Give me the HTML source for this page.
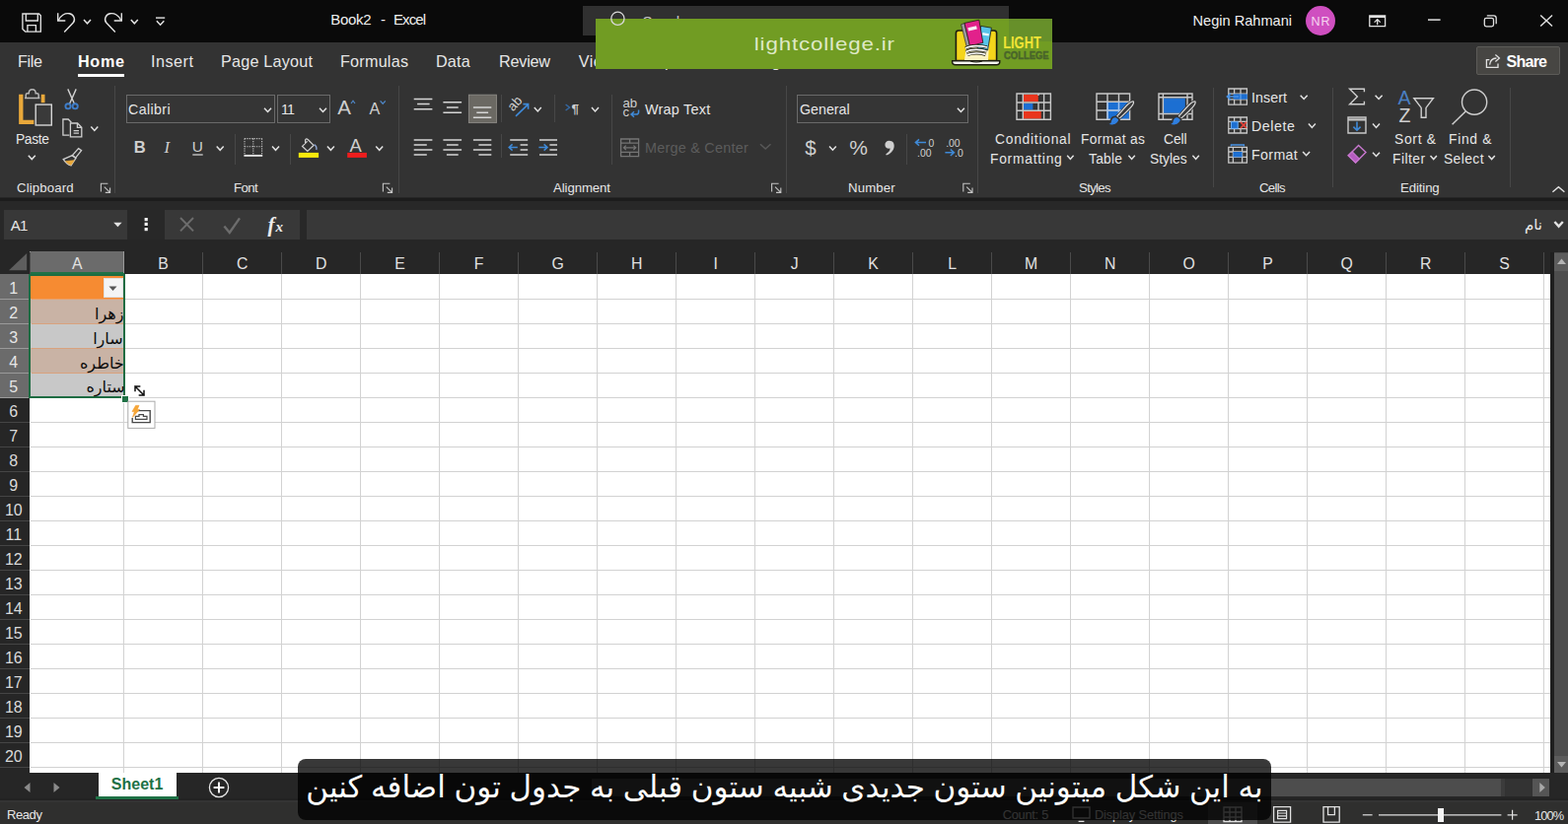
<!DOCTYPE html>
<html><head><meta charset="utf-8"><title>Excel</title>
<style>
html,body{margin:0;padding:0;background:#262626;}
body{width:1590px;height:836px;overflow:hidden;position:relative;font-family:"Liberation Sans",sans-serif;}
#r{position:absolute;left:0;top:0;width:1590px;height:836px;overflow:hidden;}
#r div,#r span,#r svg{position:absolute;display:block;}
#r svg.t{left:0;top:0;overflow:visible;}
</style></head><body><div id="r">
<div style="left:0px;top:0px;width:1590px;height:42.6px;background:#0a0a0a;"></div>
<div style="left:0px;top:42.6px;width:1590px;height:157.9px;background:#333333;"></div>
<div style="left:0px;top:200.5px;width:1590px;height:3.8px;background:#1c1c1c;"></div>
<div style="left:0px;top:204.3px;width:1590px;height:74px;background:#282828;"></div>
<div style="left:0px;top:243px;width:1590px;height:35px;background:#262626;"></div>
<svg class="t" width="1" height="1"><text transform="translate(335.30,25.00)" font-size="15" fill="#f0f0f0" textLength="41.30" lengthAdjust="spacing">Book2</text></svg>
<svg class="t" width="1" height="1"><text transform="translate(386.00,25.00)" font-size="15" fill="#f0f0f0">-</text></svg>
<svg class="t" width="1" height="1"><text transform="translate(399.00,25.00)" font-size="15" fill="#f0f0f0" textLength="33.00" lengthAdjust="spacing">Excel</text></svg>
<div style="left:591px;top:5.8px;width:432px;height:30.4px;background:#303030;"></div>
<svg class="t" width="1" height="1"><text transform="translate(651.60,26.50)" font-size="15" fill="#c8c8c8" textLength="42.40" lengthAdjust="spacing">Search</text></svg>
<svg class="t" width="1" height="1"><text transform="translate(1209.60,26.40)" font-size="14.6" fill="#f0f0f0" textLength="100.40" lengthAdjust="spacing">Negin Rahmani</text></svg>
<div style="left:1324px;top:6px;width:30px;height:30px;border-radius:15px;background:#cf4fc0"></div>
<svg class="t" width="1" height="1"><text transform="translate(1329.50,25.60)" font-size="12.5" fill="#f6d3f0" textLength="19.00" lengthAdjust="spacing">NR</text></svg>
<svg class="t" width="1" height="1"><text transform="translate(18.00,68.00)" font-size="16.2" fill="#e6e6e6" textLength="25.00" lengthAdjust="spacing">File</text></svg>
<svg class="t" width="1" height="1"><text transform="translate(79.00,68.00)" font-size="16.2" fill="#ffffff" font-weight="bold" textLength="47.00" lengthAdjust="spacing">Home</text></svg>
<div style="left:79px;top:75px;width:47px;height:3px;background:#ffffff;"></div>
<svg class="t" width="1" height="1"><text transform="translate(153.00,68.00)" font-size="16.2" fill="#e6e6e6" textLength="43.00" lengthAdjust="spacing">Insert</text></svg>
<svg class="t" width="1" height="1"><text transform="translate(224.00,68.00)" font-size="16.2" fill="#e6e6e6" textLength="93.00" lengthAdjust="spacing">Page Layout</text></svg>
<svg class="t" width="1" height="1"><text transform="translate(345.00,68.00)" font-size="16.2" fill="#e6e6e6" textLength="69.00" lengthAdjust="spacing">Formulas</text></svg>
<svg class="t" width="1" height="1"><text transform="translate(442.00,68.00)" font-size="16.2" fill="#e6e6e6" textLength="34.70" lengthAdjust="spacing">Data</text></svg>
<svg class="t" width="1" height="1"><text transform="translate(506.00,68.00)" font-size="16.2" fill="#e6e6e6" textLength="52.00" lengthAdjust="spacing">Review</text></svg>
<svg class="t" width="1" height="1"><text transform="translate(586.70,68.00)" font-size="16.2" fill="#e6e6e6" textLength="36.30" lengthAdjust="spacing">View</text></svg>
<svg class="t" width="1" height="1"><text transform="translate(650.00,68.00)" font-size="16.2" fill="#e6e6e6" textLength="33.00" lengthAdjust="spacing">Help</text></svg>
<svg class="t" width="1" height="1"><text transform="translate(710.00,68.00)" font-size="16.2" fill="#e6e6e6" textLength="90.00" lengthAdjust="spacing">Table Design</text></svg>
<div style="left:1497.4px;top:47.4px;width:84.6px;height:28.8px;background:#474643;border:1px solid #5c5b58;box-sizing:border-box;border-radius:2px"></div>
<svg class="t" width="1" height="1"><text transform="translate(1527.60,68.00)" font-size="16" fill="#ffffff" font-weight="bold" textLength="41.40" lengthAdjust="spacing">Share</text></svg>
<div style="left:604px;top:19px;width:463px;height:51px;background:#719c23;"></div>
<div style="left:1023px;top:19px;width:44px;height:23px;background:#67902a;"></div>
<svg class="t" width="1" height="1"><text transform="translate(764.80,51.20) scale(1.16,1)" font-size="19.2" fill="#dfe9c6" textLength="122.59" lengthAdjust="spacing">lightcollege.ir</text></svg>
<svg style="left:0;top:0" width="1590" height="836" viewBox="0 0 1590 836" font-family="Liberation Sans, sans-serif"><path d="M969.4 33.6 Q969.4 31 972 31 H1008 Q1010.6 31 1010.6 33.6 V61.6 H969.4 Z" stroke="#1c1c10" stroke-width="1.6" fill="#f4d51b" /><path d="M965.6 61.8 H1013.8 Q1014.2 65.8 1010.4 65.8 H969 Q965.2 65.8 965.6 61.8 Z" stroke="#1c1c10" stroke-width="1.4" fill="#f6f6f0" /><path d="M984 62 Q990 64 996 62" stroke="#1c1c10" stroke-width="1.2" fill="none" /><path d="M980 46 L1003 44 L1002 61 H978 Z" stroke="#f4d51b" stroke-width="0" fill="#fbf3c2" /><path d="M994.6 26.4 L1005.4 28.2 L1001.6 51 L991 49.2 Z" stroke="#1c1c10" stroke-width="0.8" fill="#58c3ea" /><path d="M996.4 33 L1003 34.2 L1002.6 36.6 L996 35.4 Z" stroke="#fff" stroke-width="0" fill="#eaf7fc" /><path d="M974.6 24.8 L978 23.6 L983.6 46.4 L980.2 47.6 Z" stroke="#1c1c10" stroke-width="0.6" fill="#9a9aa0" /><path d="M978 23.4 L992.8 20.2 L996.8 43.4 L983.4 46.6 Z" stroke="#1c1c10" stroke-width="0.8" fill="#e2218b" /><path d="M981.4 28.2 L990 26.2 L990.8 29.6 L982.2 31.6 Z" stroke="#fff" stroke-width="0" fill="#f8eef4" /><path d="M979 49 C984 46 994 46 1001 48 M979.4 52.4 C985 49.6 995 50 1000.6 52 M981 55.6 C986 53.4 994 53.6 999.4 55.4" stroke="#1c1c10" stroke-width="3.2" fill="none" /><path d="M979 49 C984 46 994 46 1001 48 M979.4 52.4 C985 49.6 995 50 1000.6 52 M981 55.6 C986 53.4 994 53.6 999.4 55.4" stroke="#ffffff" stroke-width="1.7" fill="none" /><text x="1017.2" y="49" font-size="15.6" font-weight="bold" fill="#f3e436" textLength="38.6" lengthAdjust="spacingAndGlyphs">LIGHT</text><text x="1018" y="60.4" font-size="11.6" font-weight="bold" fill="#48642a" stroke="#48642a" stroke-width="0.5" textLength="45.6" lengthAdjust="spacingAndGlyphs">COLLEGE</text></svg>
<svg class="t" width="1" height="1"><text transform="translate(17.00,195.00)" font-size="13.2" fill="#e6e6e6" textLength="57.70" lengthAdjust="spacing">Clipboard</text></svg>
<svg class="t" width="1" height="1"><text transform="translate(237.00,195.00)" font-size="13.2" fill="#e6e6e6" textLength="24.60" lengthAdjust="spacing">Font</text></svg>
<svg class="t" width="1" height="1"><text transform="translate(561.00,195.00)" font-size="13.2" fill="#e6e6e6" textLength="58.00" lengthAdjust="spacing">Alignment</text></svg>
<svg class="t" width="1" height="1"><text transform="translate(860.00,195.00)" font-size="13.2" fill="#e6e6e6" textLength="47.70" lengthAdjust="spacing">Number</text></svg>
<svg class="t" width="1" height="1"><text transform="translate(1094.00,195.00)" font-size="13.2" fill="#e6e6e6" textLength="32.60" lengthAdjust="spacing">Styles</text></svg>
<svg class="t" width="1" height="1"><text transform="translate(1277.00,195.00)" font-size="13.2" fill="#e6e6e6" textLength="26.70" lengthAdjust="spacing">Cells</text></svg>
<svg class="t" width="1" height="1"><text transform="translate(1420.00,195.00)" font-size="13.2" fill="#e6e6e6" textLength="39.70" lengthAdjust="spacing">Editing</text></svg>
<svg class="t" width="1" height="1"><text transform="translate(16.00,146.00)" font-size="13.8" fill="#e6e6e6" textLength="34.00" lengthAdjust="spacing">Paste</text></svg>
<div style="left:127.5px;top:96px;width:151px;height:28.5px;background:#353535;border:1px solid #6a6a6a;box-sizing:border-box;"></div>
<div style="left:281px;top:96px;width:53.6px;height:28.5px;background:#353535;border:1px solid #6a6a6a;box-sizing:border-box;"></div>
<div style="left:808px;top:96px;width:174px;height:28.5px;background:#353535;border:1px solid #6a6a6a;box-sizing:border-box;"></div>
<svg class="t" width="1" height="1"><text transform="translate(130.00,115.70)" font-size="14.200000000000001" fill="#e6e6e6" textLength="42.60" lengthAdjust="spacing">Calibri</text></svg>
<svg class="t" width="1" height="1"><text transform="translate(285.00,115.70)" font-size="14.200000000000001" fill="#e6e6e6" textLength="14.00" lengthAdjust="spacing">11</text></svg>
<svg class="t" width="1" height="1"><text transform="translate(811.00,115.70)" font-size="14.200000000000001" fill="#e6e6e6" textLength="50.70" lengthAdjust="spacing">General</text></svg>
<svg class="t" width="1" height="1"><text transform="translate(654.00,115.90)" font-size="14.4" fill="#e6e6e6" textLength="66.20" lengthAdjust="spacing">Wrap Text</text></svg>
<svg class="t" width="1" height="1"><text transform="translate(654.00,155.20)" font-size="14.4" fill="#5c5c5c" textLength="104.70" lengthAdjust="spacing">Merge &amp; Center</text></svg>
<svg class="t" width="1" height="1"><text transform="translate(1009.00,146.00)" font-size="13.8" fill="#e6e6e6" textLength="76.60" lengthAdjust="spacing">Conditional</text></svg>
<svg class="t" width="1" height="1"><text transform="translate(1004.00,166.00)" font-size="13.8" fill="#e6e6e6" textLength="72.80" lengthAdjust="spacing">Formatting</text></svg>
<svg class="t" width="1" height="1"><text transform="translate(1096.00,146.00)" font-size="13.8" fill="#e6e6e6" textLength="65.00" lengthAdjust="spacing">Format as</text></svg>
<svg class="t" width="1" height="1"><text transform="translate(1104.00,166.00)" font-size="13.8" fill="#e6e6e6" textLength="34.00" lengthAdjust="spacing">Table</text></svg>
<svg class="t" width="1" height="1"><text transform="translate(1180.00,146.00)" font-size="13.8" fill="#e6e6e6" textLength="23.60" lengthAdjust="spacing">Cell</text></svg>
<svg class="t" width="1" height="1"><text transform="translate(1166.00,166.00)" font-size="13.8" fill="#e6e6e6" textLength="37.60" lengthAdjust="spacing">Styles</text></svg>
<svg class="t" width="1" height="1"><text transform="translate(1269.00,104.00)" font-size="14.200000000000001" fill="#e6e6e6" textLength="36.00" lengthAdjust="spacing">Insert</text></svg>
<svg class="t" width="1" height="1"><text transform="translate(1269.00,132.80)" font-size="14.200000000000001" fill="#e6e6e6" textLength="43.80" lengthAdjust="spacing">Delete</text></svg>
<svg class="t" width="1" height="1"><text transform="translate(1269.00,161.70)" font-size="14.200000000000001" fill="#e6e6e6" textLength="46.80" lengthAdjust="spacing">Format</text></svg>
<svg class="t" width="1" height="1"><text transform="translate(1414.00,146.00)" font-size="13.8" fill="#e6e6e6" textLength="42.00" lengthAdjust="spacing">Sort &amp;</text></svg>
<svg class="t" width="1" height="1"><text transform="translate(1412.00,166.00)" font-size="13.8" fill="#e6e6e6" textLength="33.00" lengthAdjust="spacing">Filter</text></svg>
<svg class="t" width="1" height="1"><text transform="translate(1469.00,146.00)" font-size="13.8" fill="#e6e6e6" textLength="43.50" lengthAdjust="spacing">Find &amp;</text></svg>
<svg class="t" width="1" height="1"><text transform="translate(1464.00,166.00)" font-size="13.8" fill="#e6e6e6" textLength="40.50" lengthAdjust="spacing">Select</text></svg>
<div style="left:116px;top:87px;width:1px;height:109px;background:#474747;"></div>
<div style="left:404px;top:87px;width:1px;height:109px;background:#474747;"></div>
<div style="left:797px;top:87px;width:1px;height:109px;background:#474747;"></div>
<div style="left:991px;top:87px;width:1px;height:109px;background:#474747;"></div>
<div style="left:1230px;top:89px;width:1px;height:101px;background:#474747;"></div>
<div style="left:1351px;top:89px;width:1px;height:101px;background:#474747;"></div>
<div style="left:1531px;top:89px;width:1px;height:101px;background:#474747;"></div>
<div style="left:237.5px;top:136px;width:1px;height:31px;background:#474747;"></div>
<div style="left:293.5px;top:136px;width:1px;height:31px;background:#474747;"></div>
<div style="left:507.5px;top:96px;width:1px;height:28px;background:#474747;"></div>
<div style="left:507.5px;top:136px;width:1px;height:24px;background:#474747;"></div>
<div style="left:562px;top:96px;width:1px;height:28px;background:#474747;"></div>
<div style="left:619.5px;top:96px;width:1px;height:71px;background:#474747;"></div>
<div style="left:919px;top:136px;width:1px;height:31px;background:#474747;"></div>
<svg style="left:0;top:0" width="1590" height="836" viewBox="0 0 1590 836" font-family="Liberation Sans, sans-serif"><path d="M22.9 14 H39.5 L41.3 15.8 V32.1 H25.6 L22.9 29.4 Z M26.3 14 V21 H38.3 V14 M27.9 32 V25.6 H36.4 V32" stroke="#e2e2e2" stroke-width="1.35" fill="none" /><path d="M58.7 13.2 V21 H66.3" stroke="#e2e2e2" stroke-width="1.4" fill="none" /><path d="M59.3 20.6 C61.5 15.6 66 12.9 70.4 13.8 C75.2 14.9 76.8 19.9 74.2 23.1 L65.2 32.6" stroke="#e2e2e2" stroke-width="1.4" fill="none" /><path d="M85.00 20.00 L88.50 23.80 L92.00 20.00" stroke="#e2e2e2" stroke-width="1.5" fill="none" /><path d="M123.3 13.2 V21 H115.7" stroke="#e2e2e2" stroke-width="1.4" fill="none" /><path d="M122.7 20.6 C120.5 15.6 116 12.9 111.6 13.8 C106.8 14.9 105.2 19.9 107.8 23.1 L116.8 32.6" stroke="#e2e2e2" stroke-width="1.4" fill="none" /><path d="M132.80 20.00 L136.30 23.80 L139.80 20.00" stroke="#e2e2e2" stroke-width="1.5" fill="none" /><path d="M158 18.1 H167.2" stroke="#e2e2e2" stroke-width="1.4" fill="none" /><path d="M158.90 21.20 L162.60 25.20 L166.30 21.20" stroke="#e2e2e2" stroke-width="1.5" fill="none" /><circle cx="626.4" cy="18.8" r="6.6" fill="none" stroke="#d8d8d8" stroke-width="1.3"/><path d="M1388.8 16 H1404.6 V26.6 H1388.8 Z" stroke="#e2e2e2" stroke-width="1.3" fill="none" /><path d="M1388.8 17 H1404.6" stroke="#e2e2e2" stroke-width="2" fill="none" /><path d="M1396.7 25.2 V19.8 M1393.7 22.6 L1396.7 19.6 L1399.7 22.6" stroke="#e2e2e2" stroke-width="1.3" fill="none" /><path d="M1448 20.1 H1460.6" stroke="#e2e2e2" stroke-width="1.5" fill="none" /><rect x="1505.3" y="18.4" width="9.2" height="8.4" rx="1.8" fill="none" stroke="#e2e2e2" stroke-width="1.3"/><path d="M1507.8 15.8 H1514.6 Q1517.2 15.8 1517.2 18.4 V24.2" stroke="#e2e2e2" stroke-width="1.3" fill="none" /><path d="M1562.2 15.4 L1574 26.6 M1574 15.4 L1562.2 26.6" stroke="#e2e2e2" stroke-width="1.4" fill="none" /><path d="M1510.3 60.6 H1507.4 V68.4 H1519 V64.6" stroke="#e2e2e2" stroke-width="1.3" fill="none" /><path d="M1510.6 65.6 C1511 61.4 1514 59.2 1517.4 59 M1516.4 55.6 L1520.4 59 L1516.4 62.4" stroke="#e2e2e2" stroke-width="1.3" fill="none" /><path d="M21.3 95.8 V123.8 H34.4" stroke="#e9a83a" stroke-width="4.3" fill="none" /><path d="M43.6 95.8 V104.2" stroke="#e9a83a" stroke-width="3.8" fill="none" /><path d="M25 99.6 H40.4 M26.2 99.4 V96.4 Q26.2 94.8 27.8 94.8 H29.2 C29.2 89.4 36.2 89.4 36.2 94.8 H37.6 Q39.2 94.8 39.2 96.4 V99.4" stroke="#b9b9b9" stroke-width="1.5" fill="none" /><rect x="36.2" y="106.1" width="16.1" height="20.9" fill="#3a3a3a" stroke="#d6d6d6" stroke-width="1.4" /><path d="M28.80 157.80 L32.30 161.60 L35.80 157.80" stroke="#e2e2e2" stroke-width="1.5" fill="none" /><path d="M68.8 90.4 L75.4 105.2 M77.2 90.4 L70.6 105.2" stroke="#d0d0d0" stroke-width="1.4" fill="none" /><circle cx="69" cy="107.8" r="2.6" fill="none" stroke="#3f7dc8" stroke-width="1.9"/><circle cx="76.2" cy="107.8" r="2.6" fill="none" stroke="#3f7dc8" stroke-width="1.9"/><path d="M70.4 137.2 H63.9 V121 H69.2 L72.4 124.2" stroke="#cfcfcf" stroke-width="1.3" fill="none" /><path d="M71.4 125 H78.6 L82.8 129.2 V138.8 H71.4 Z M78.4 125.2 V129.4 H82.6" stroke="#cfcfcf" stroke-width="1.3" fill="none" /><path d="M74.6 132.6 H80 M74.6 135.2 H80" stroke="#cfcfcf" stroke-width="1.2" fill="none" /><path d="M92.30 128.60 L95.80 132.40 L99.30 128.60" stroke="#e2e2e2" stroke-width="1.5" fill="none" /><path d="M79.6 150.6 L82.6 152.6 L76.6 160.2 L73.2 157.8 Z" stroke="#cfcfcf" stroke-width="1.3" fill="none" /><path d="M73.4 157.6 L64.2 161.6 C66.2 164.6 69 167 72 168 L77 160.4 Z" stroke="#cfcfcf" stroke-width="1.3" fill="none" /><path d="M66.4 163.6 L75.4 162.6 L72 167.6 C69.6 166.6 67.6 165.2 66.4 163.6 Z" stroke="#e9a83a" stroke-width="0.5" fill="#e9a83a" /><path d="M268.00 109.70 L271.50 113.50 L275.00 109.70" stroke="#e2e2e2" stroke-width="1.5" fill="none" /><path d="M324.00 109.70 L327.50 113.50 L331.00 109.70" stroke="#e2e2e2" stroke-width="1.5" fill="none" /><text x="342.2" y="116.4" font-size="20.5" fill="#cfcfcf" >A</text><path d="M356 105 L358 102.2 L360 105" stroke="#4f86c6" stroke-width="1.2" fill="none" /><text x="374.4" y="116.4" font-size="16.2" fill="#cfcfcf" >A</text><path d="M385.6 102.4 L388.2 105.2 L390.8 102.4" stroke="#4f86c6" stroke-width="1.3" fill="none" /><text x="135.8" y="154.7" font-size="16.6" fill="#cfcfcf" font-weight="bold">B</text><text x="166.6" y="154.7" font-size="16.6" fill="#cfcfcf" font-style="italic" font-family="Liberation Serif">I</text><text x="194.8" y="153.6" font-size="15.4" fill="#cfcfcf" >U</text><path d="M195.3 157 H205.7" stroke="#cfcfcf" stroke-width="1.3" fill="none" /><path d="M219.70 148.50 L223.20 152.30 L226.70 148.50" stroke="#e2e2e2" stroke-width="1.5" fill="none" /><path d="M248 140.6 H265.6 M248 140.6 V157 M265.6 140.6 V157 M256.8 140.6 V157 M248 148.8 H265.6" stroke="#c4c4c4" stroke-width="1.1" fill="none" stroke-dasharray="1.2 1.2"/><path d="M247.4 157.9 H266.2" stroke="#e2e2e2" stroke-width="1.9" fill="none" /><path d="M276.00 148.50 L279.50 152.30 L283.00 148.50" stroke="#e2e2e2" stroke-width="1.5" fill="none" /><path d="M311.6 143.4 L306.6 148.4 L311.8 153.4 L318 147.4 L312.4 141.8 Q310.4 140 309.6 142 V146" stroke="#cfcfcf" stroke-width="1.3" fill="none" /><path d="M318.6 146.6 C320.6 147.8 321.2 150 320.8 152" stroke="#8fa6d4" stroke-width="1.4" fill="none" /><rect x="302.8" y="154.9" width="20.3" height="5" fill="#f7e90c" stroke="none" stroke-width="0" /><path d="M331.90 148.50 L335.40 152.30 L338.90 148.50" stroke="#e2e2e2" stroke-width="1.5" fill="none" /><text x="354.6" y="153.6" font-size="18.4" fill="#cfcfcf" >A</text><rect x="352.2" y="154.9" width="19.7" height="5" fill="#ee1d1d" stroke="none" stroke-width="0" /><path d="M381.20 148.50 L384.70 152.30 L388.20 148.50" stroke="#e2e2e2" stroke-width="1.5" fill="none" /><path d="M419.7 100.4 H438.4 M423.1 105.5 H435.6 M419.7 110.8 H438.4 " stroke="#d6d6d6" stroke-width="1.5" fill="none" /><path d="M449.4 103.8 H468.1 M452.9 109.1 H464.7 M449.4 114.2 H468.1 " stroke="#d6d6d6" stroke-width="1.5" fill="none" /><rect x="475.4" y="96.2" width="28" height="28.4" fill="#6b6963" stroke="#8d8b86" stroke-width="0.9" /><path d="M479.9 109 H498.3 M483.3 114.2 H495.1 M479.9 119.3 H498.3 " stroke="#d6d6d6" stroke-width="1.5" fill="none" /><path d="M419.7 141.9 H438.4 M419.7 147 H432.8 M419.7 152 H438.4 M419.7 157.1 H432.8 " stroke="#d6d6d6" stroke-width="1.5" fill="none" /><path d="M449.4 141.9 H468.1 M452.9 147 H464.7 M449.4 152 H468.1 M452.9 157.1 H464.7 " stroke="#d6d6d6" stroke-width="1.5" fill="none" /><path d="M479.9 141.9 H498.3 M485.4 147 H498.3 M479.9 152 H498.3 M485.4 157.1 H498.3 " stroke="#d6d6d6" stroke-width="1.5" fill="none" /><text x="0" y="0" font-size="13.4" fill="#cfcfcf" transform="translate(520.2,113.6) rotate(-48)">ab</text><path d="M523 117.8 L535 106.4 M530.4 105.6 L535.6 105.6 L535.6 110.8" stroke="#3f8ad8" stroke-width="1.6" fill="none" /><path d="M541.80 109.10 L545.30 112.90 L548.80 109.10" stroke="#e2e2e2" stroke-width="1.5" fill="none" /><path d="M573.6 106 L577.6 109 L573.6 112" stroke="#356aa6" stroke-width="1.4" fill="none" /><text x="579.6" y="114.6" font-size="13.5" fill="#cfcfcf" font-weight="bold">¶</text><path d="M600.00 109.10 L603.50 112.90 L607.00 109.10" stroke="#e2e2e2" stroke-width="1.5" fill="none" /><path d="M517.2 141.9 H535.2 M527.6 147 H535.2 M527.6 152 H535.2 M517.2 157.1 H535.2 " stroke="#d6d6d6" stroke-width="1.5" fill="none" /><path d="M524.8 149.5 H516.4 M519.6 146.4 L516.2 149.5 L519.6 152.6" stroke="#3f8ad8" stroke-width="1.5" fill="none" /><path d="M547 141.9 H565 M557.4 147 H565 M557.4 152 H565 M547 157.1 H565 " stroke="#d6d6d6" stroke-width="1.5" fill="none" /><path d="M546.4 149.5 H554.8 M551.6 146.4 L555 149.5 L551.6 152.6" stroke="#3f8ad8" stroke-width="1.5" fill="none" /><text x="631.4" y="109.3" font-size="13.2" fill="#cfcfcf" >ab</text><text x="631.4" y="118.4" font-size="13.2" fill="#cfcfcf" >c</text><path d="M647.6 111.4 V113.4 Q647.6 116 645 116 H640.4 M643 113.2 L640 116 L643 118.8" stroke="#3f8ad8" stroke-width="1.5" fill="none" /><path d="M629.6 141 H647.6 V158.6 H629.6 Z M629.6 145.2 H647.6 M629.6 154.4 H647.6 M638.6 141 V145.2 M638.6 154.4 V158.6" stroke="#757575" stroke-width="1.3" fill="none" /><path d="M632.6 149.8 H644.6 M634.8 147.6 L632.4 149.8 L634.8 152 M642.4 147.6 L644.8 149.8 L642.4 152" stroke="#757575" stroke-width="1.2" fill="none" /><path d="M770.95 146.20 L776.20 151.00 L781.45 146.20" stroke="#585858" stroke-width="1.5" fill="none" /><path d="M970.90 109.70 L974.40 113.50 L977.90 109.70" stroke="#e2e2e2" stroke-width="1.5" fill="none" /><text x="816.2" y="157" font-size="20.5" fill="#cfcfcf" >$</text><path d="M841.00 148.40 L844.40 152.20 L847.80 148.40" stroke="#e2e2e2" stroke-width="1.5" fill="none" /><text x="861.2" y="157.4" font-size="21" fill="#cfcfcf" >%</text><path d="M901.6 142.8 C905.4 142.8 907.2 145.6 906.6 149.2 C906 152.8 903 156.2 898.8 157.6 L898.2 156.4 C900.8 155 902.6 152.8 902.6 150.6 C899.8 151.2 897.4 149.6 897.4 147 C897.4 144.6 899.2 142.8 901.6 142.8 Z" stroke="#cfcfcf" stroke-width="0" fill="#cfcfcf" /><path d="M939 144.6 H928.6 M932 141.4 L928.4 144.6 L932 147.8" stroke="#3f8ad8" stroke-width="1.5" fill="none" /><text x="941.6" y="148.6" font-size="10.4" fill="#cfcfcf" >0</text><text x="930" y="158.6" font-size="10.4" fill="#cfcfcf" >.00</text><text x="959.2" y="148.6" font-size="10.4" fill="#cfcfcf" >.00</text><path d="M958.4 154.8 H967 M963.8 151.6 L967.4 154.8 L963.8 158" stroke="#3f8ad8" stroke-width="1.5" fill="none" /><text x="968" y="158.6" font-size="10.4" fill="#cfcfcf" >.0</text><rect x="1037.9" y="96" width="14.9" height="7.3" fill="#e9351d" stroke="none" stroke-width="0" /><rect x="1037.9" y="105" width="9.5" height="6.4" fill="#1c6fd2" stroke="none" stroke-width="0" /><rect x="1037.9" y="112.9" width="17.8" height="7.7" fill="#e9351d" stroke="none" stroke-width="0" /><path d="M1031 95 H1065.4 V121.2 H1031 Z M1037.3 95 V121.2 M1058.6 95 V121.2 M1031 104 H1065.4 M1031 112.3 H1065.4 M1053 104 V112.3 M1053 95 V97" stroke="#c9c9c9" stroke-width="1.4" fill="none" /><path d="M1082.20 157.80 L1085.40 161.40 L1088.60 157.80" stroke="#e2e2e2" stroke-width="1.5" fill="none" /><rect x="1123" y="103.2" width="23" height="18" fill="#1c6fd2" stroke="none" stroke-width="0" /><path d="M1112 95 H1145.6 V121.2 H1112 Z M1123 95 V121.2 M1134.5 95 V121.2 M1112 103.2 H1145.6 M1112 112 H1145.6" stroke="#c9c9c9" stroke-width="1.4" fill="none" /><path d="M1123 103.2 V121.2 M1134.5 103.2 V121.2 M1123 112 H1145.6" stroke="#9cc4f4" stroke-width="1.1" fill="none" /><path d="M1149.4 103 C1147 102 1144 105 1132.6 118.2 L1134.8 120.4 C1146 110 1150.6 105.6 1149.4 103 Z" stroke="#333333" stroke-width="2.6" fill="#333333" /><path d="M1149.4 103 C1147 102 1144 105 1132.6 118.2 L1134.8 120.4 C1146 110 1150.6 105.6 1149.4 103 Z" stroke="#d9d9d9" stroke-width="1.2" fill="#3a3a3a" /><path d="M1131.6 118.4 C1128 118 1126.4 121 1126 124 C1125 125.4 1123.4 125.6 1122 125.4 C1125 128 1131 128 1133.6 124.6 C1135 122.8 1135.2 121.4 1134.6 120.6 Z" stroke="#333333" stroke-width="1.6" fill="#2f7fe0" /><path d="M1144.40 157.80 L1147.60 161.40 L1150.80 157.80" stroke="#e2e2e2" stroke-width="1.5" fill="none" /><rect x="1180" y="99.6" width="21.8" height="15.2" fill="#1c6fd2" stroke="none" stroke-width="0" /><path d="M1175 95 H1209 V121.2 H1175 Z M1179.4 95 V121.2 M1204 95 V121.2 M1175 98.8 H1209 M1175 115.5 H1209" stroke="#c9c9c9" stroke-width="1.4" fill="none" /><path d="M1212.0 103 C1209.6 102 1206.6 105 1195.1999999999998 118.2 L1197.3999999999999 120.4 C1208.6 110 1213.1999999999998 105.6 1212.0 103 Z" stroke="#333333" stroke-width="2.6" fill="#333333" /><path d="M1212.0 103 C1209.6 102 1206.6 105 1195.1999999999998 118.2 L1197.3999999999999 120.4 C1208.6 110 1213.1999999999998 105.6 1212.0 103 Z" stroke="#d9d9d9" stroke-width="1.2" fill="#3a3a3a" /><path d="M1194.1999999999998 118.4 C1190.6 118 1189.0 121 1188.6 124 C1187.6 125.4 1186.0 125.6 1184.6 125.4 C1187.6 128 1193.6 128 1196.1999999999998 124.6 C1197.6 122.8 1197.8 121.4 1197.1999999999998 120.6 Z" stroke="#333333" stroke-width="1.6" fill="#2f7fe0" /><path d="M1209.40 157.80 L1212.60 161.40 L1215.80 157.80" stroke="#e2e2e2" stroke-width="1.5" fill="none" /><path d="M1245.8 90 H1264.4 V106.2 H1245.8 Z M1245.8 95.2 H1264.4 M1245.8 100.8 H1264.4 M1251.6 90 V106.2 M1258 90 V106.2" stroke="#c9c9c9" stroke-width="1.3" fill="none" /><rect x="1250.6" y="95.4" width="14.2" height="5.3" fill="#1c6fd2" stroke="none" stroke-width="0" /><path d="M1258 95.4 V100.7" stroke="#7fb6f2" stroke-width="0.9" fill="none" /><path d="M1256 98 H1244.6 M1248 94.8 L1244.4 98 L1248 101.2" stroke="#4a94e6" stroke-width="1.6" fill="none" /><path d="M1318.70 96.70 L1322.20 100.50 L1325.70 96.70" stroke="#e2e2e2" stroke-width="1.5" fill="none" /><path d="M1245.8 119 H1264.4 V135 H1245.8 Z M1245.8 123.4 H1264.4 M1245.8 130.6 H1264.4 M1251.6 119 V123.4 M1258 119 V123.4 M1251.6 130.6 V135 M1258 130.6 V135" stroke="#c9c9c9" stroke-width="1.3" fill="none" /><rect x="1248.4" y="123.6" width="6.8" height="6.8" fill="#1c6fd2" stroke="#6fb0f5" stroke-width="1" /><path d="M1258 123.8 L1264 130 M1264 123.8 L1258 130" stroke="#e8433a" stroke-width="1.7" fill="none" /><path d="M1326.90 125.60 L1330.40 129.40 L1333.90 125.60" stroke="#e2e2e2" stroke-width="1.5" fill="none" /><path d="M1245.8 149.4 H1264.4 V165.2 H1245.8 Z M1245.8 154 H1264.4 M1245.8 159.4 H1264.4 M1250.4 149.4 V165.2 M1259.6 149.4 V165.2" stroke="#c9c9c9" stroke-width="1.3" fill="none" /><rect x="1250.4" y="154" width="9.2" height="5.4" fill="#1c6fd2" stroke="none" stroke-width="0" /><path d="M1248.4 148.6 V147 H1261.4 V148.6" stroke="#4a94e6" stroke-width="1.3" fill="none" /><path d="M1321.10 153.90 L1324.60 157.70 L1328.10 153.90" stroke="#e2e2e2" stroke-width="1.5" fill="none" /><path d="M1383.4 93.2 V90.2 H1368.6 L1376.4 98 L1368.6 105.8 H1383.4 V102.8" stroke="#cfcfcf" stroke-width="1.4" fill="none" /><path d="M1394.60 96.70 L1398.10 100.50 L1401.60 96.70" stroke="#e2e2e2" stroke-width="1.5" fill="none" /><path d="M1367 119 H1385 V135 H1367 Z" stroke="#c9c9c9" stroke-width="1.4" fill="none" /><path d="M1367 121.4 H1385" stroke="#c9c9c9" stroke-width="2.2" fill="none" /><path d="M1376 123.4 V132 M1372.4 128.6 L1376 132.2 L1379.6 128.6" stroke="#3f8ad8" stroke-width="1.6" fill="none" /><path d="M1392.00 125.60 L1395.50 129.40 L1399.00 125.60" stroke="#e2e2e2" stroke-width="1.5" fill="none" /><path d="M1377.6 147.4 L1385 154.6 L1374.6 165 L1367.2 157.8 Z" stroke="#c878cf" stroke-width="1.4" fill="none" /><path d="M1371.2 154 L1378.4 161.2 L1374.6 165 L1367.2 157.8 Z" stroke="#c878cf" stroke-width="1.2" fill="#b65cc0" /><path d="M1392.00 154.70 L1395.50 158.50 L1399.00 154.70" stroke="#e2e2e2" stroke-width="1.5" fill="none" /><text x="1417.6" y="106.4" font-size="19.6" fill="#4a7fc2" >A</text><text x="1418.4" y="124.2" font-size="19.6" fill="#cfcfcf" >Z</text><path d="M1433.8 99.8 H1453.4 L1446 109.4 V119.2 H1441.2 V109.4 Z" stroke="#cfcfcf" stroke-width="1.4" fill="none" /><path d="M1450.50 158.00 L1453.70 161.60 L1456.90 158.00" stroke="#e2e2e2" stroke-width="1.5" fill="none" /><circle cx="1495.1" cy="103.6" r="12.6" fill="none" stroke="#cfcfcf" stroke-width="1.4"/><path d="M1486.2 113 L1472.6 126.2" stroke="#cfcfcf" stroke-width="1.5" fill="none" /><path d="M1509.40 158.00 L1512.60 161.60 L1515.80 158.00" stroke="#e2e2e2" stroke-width="1.5" fill="none" /><path d="M109.4 186.2 H102.4 V194.6 M105.80000000000001 189.6 L111.4 195.2 M111.60000000000001 190.6 V195.4 H106.80000000000001" stroke="#c4c4c4" stroke-width="1.1" fill="none" /><path d="M395.4 186.2 H388.4 V194.6 M391.79999999999995 189.6 L397.4 195.2 M397.59999999999997 190.6 V195.4 H392.79999999999995" stroke="#c4c4c4" stroke-width="1.1" fill="none" /><path d="M789.6 186.2 H782.6 V194.6 M786.0 189.6 L791.6 195.2 M791.8000000000001 190.6 V195.4 H787.0" stroke="#c4c4c4" stroke-width="1.1" fill="none" /><path d="M983.8 186.2 H976.8 V194.6 M980.1999999999999 189.6 L985.8 195.2 M986.0 190.6 V195.4 H981.1999999999999" stroke="#c4c4c4" stroke-width="1.1" fill="none" /><path d="M1574.4 194.8 L1580.4 189.6 L1586.4 194.8" stroke="#e2e2e2" stroke-width="1.4" fill="none" /></svg>
<div style="left:4.4px;top:213.2px;width:124.5px;height:29.5px;background:#383838;"></div>
<div style="left:167.3px;top:213.2px;width:137px;height:29.5px;background:#383838;"></div>
<div style="left:311px;top:213.2px;width:1279px;height:29.5px;background:#383838;"></div>
<svg class="t" width="1" height="1"><text transform="translate(10.70,233.90)" font-size="15" fill="#e6e6e6" textLength="17.60" lengthAdjust="spacing">A1</text></svg>
<svg style="left:0;top:0" width="1590" height="836" viewBox="0 0 1590 836" font-family="Liberation Sans, sans-serif"><path d="M115.2 225.8 H123.6 L119.4 230.2 Z" stroke="#e2e2e2" stroke-width="0" fill="#e2e2e2" /><rect x="146.6" y="221" width="3.2" height="3.2" fill="#f2f2f2" stroke="none" stroke-width="0" /><rect x="146.6" y="225.8" width="3.2" height="3.2" fill="#f2f2f2" stroke="none" stroke-width="0" /><rect x="146.6" y="231" width="3.2" height="3.2" fill="#f2f2f2" stroke="none" stroke-width="0" /><path d="M183 221 L196 234.4 M196 221 L183 234.4" stroke="#6c6c6c" stroke-width="2" fill="none" /><path d="M227.4 229.6 L232.8 236 L243 221.4" stroke="#6c6c6c" stroke-width="2.4" fill="none" /><text x="271.4" y="234.6" font-size="21" fill="#ececec" font-family="Liberation Serif" font-style="italic" font-weight="bold">f</text><text x="279.6" y="234.6" font-size="15" fill="#ececec" font-family="Liberation Serif" font-style="italic" font-weight="bold">x</text><path d="M1576.4 225 L1580.6 229.6 L1584.8 225" stroke="#e2e2e2" stroke-width="2.4" fill="none" /><path d="M27.2 257 V274.2 H9 Z" stroke="#5e5e5e" stroke-width="0" fill="#5e5e5e" /></svg>
<div style="left:30px;top:278px;width:1542px;height:506px;background:#ffffff;"></div>
<div style="left:30px;top:255px;width:96px;height:23px;background:#6b6b6b;"></div>
<div style="left:30px;top:276.2px;width:96px;height:2px;background:#1f7246;"></div>
<div style="left:30px;top:255px;width:1px;height:21.5px;background:#9a9a9a;"></div>
<div style="left:125.4px;top:255px;width:1px;height:21.5px;background:#9a9a9a;"></div>
<svg class="t" width="1" height="1"><text transform="translate(78.30,272.90)" font-size="15.8" fill="#e2e2e2" text-anchor="middle">A</text></svg>
<svg class="t" width="1" height="1"><text transform="translate(165.60,272.90)" font-size="15.8" fill="#e2e2e2" text-anchor="middle">B</text></svg>
<svg class="t" width="1" height="1"><text transform="translate(245.60,272.90)" font-size="15.8" fill="#e2e2e2" text-anchor="middle">C</text></svg>
<svg class="t" width="1" height="1"><text transform="translate(325.60,272.90)" font-size="15.8" fill="#e2e2e2" text-anchor="middle">D</text></svg>
<svg class="t" width="1" height="1"><text transform="translate(405.60,272.90)" font-size="15.8" fill="#e2e2e2" text-anchor="middle">E</text></svg>
<svg class="t" width="1" height="1"><text transform="translate(485.60,272.90)" font-size="15.8" fill="#e2e2e2" text-anchor="middle">F</text></svg>
<svg class="t" width="1" height="1"><text transform="translate(565.60,272.90)" font-size="15.8" fill="#e2e2e2" text-anchor="middle">G</text></svg>
<svg class="t" width="1" height="1"><text transform="translate(645.60,272.90)" font-size="15.8" fill="#e2e2e2" text-anchor="middle">H</text></svg>
<svg class="t" width="1" height="1"><text transform="translate(725.60,272.90)" font-size="15.8" fill="#e2e2e2" text-anchor="middle">I</text></svg>
<svg class="t" width="1" height="1"><text transform="translate(805.60,272.90)" font-size="15.8" fill="#e2e2e2" text-anchor="middle">J</text></svg>
<svg class="t" width="1" height="1"><text transform="translate(885.60,272.90)" font-size="15.8" fill="#e2e2e2" text-anchor="middle">K</text></svg>
<svg class="t" width="1" height="1"><text transform="translate(965.60,272.90)" font-size="15.8" fill="#e2e2e2" text-anchor="middle">L</text></svg>
<svg class="t" width="1" height="1"><text transform="translate(1045.60,272.90)" font-size="15.8" fill="#e2e2e2" text-anchor="middle">M</text></svg>
<svg class="t" width="1" height="1"><text transform="translate(1125.60,272.90)" font-size="15.8" fill="#e2e2e2" text-anchor="middle">N</text></svg>
<svg class="t" width="1" height="1"><text transform="translate(1205.60,272.90)" font-size="15.8" fill="#e2e2e2" text-anchor="middle">O</text></svg>
<svg class="t" width="1" height="1"><text transform="translate(1285.60,272.90)" font-size="15.8" fill="#e2e2e2" text-anchor="middle">P</text></svg>
<svg class="t" width="1" height="1"><text transform="translate(1365.60,272.90)" font-size="15.8" fill="#e2e2e2" text-anchor="middle">Q</text></svg>
<svg class="t" width="1" height="1"><text transform="translate(1445.60,272.90)" font-size="15.8" fill="#e2e2e2" text-anchor="middle">R</text></svg>
<svg class="t" width="1" height="1"><text transform="translate(1525.60,272.90)" font-size="15.8" fill="#e2e2e2" text-anchor="middle">S</text></svg>
<div style="left:205px;top:256px;width:1px;height:22px;background:#4a4a4a;"></div>
<div style="left:285px;top:256px;width:1px;height:22px;background:#4a4a4a;"></div>
<div style="left:365px;top:256px;width:1px;height:22px;background:#4a4a4a;"></div>
<div style="left:445px;top:256px;width:1px;height:22px;background:#4a4a4a;"></div>
<div style="left:525px;top:256px;width:1px;height:22px;background:#4a4a4a;"></div>
<div style="left:605px;top:256px;width:1px;height:22px;background:#4a4a4a;"></div>
<div style="left:685px;top:256px;width:1px;height:22px;background:#4a4a4a;"></div>
<div style="left:765px;top:256px;width:1px;height:22px;background:#4a4a4a;"></div>
<div style="left:845px;top:256px;width:1px;height:22px;background:#4a4a4a;"></div>
<div style="left:925px;top:256px;width:1px;height:22px;background:#4a4a4a;"></div>
<div style="left:1005px;top:256px;width:1px;height:22px;background:#4a4a4a;"></div>
<div style="left:1085px;top:256px;width:1px;height:22px;background:#4a4a4a;"></div>
<div style="left:1165px;top:256px;width:1px;height:22px;background:#4a4a4a;"></div>
<div style="left:1245px;top:256px;width:1px;height:22px;background:#4a4a4a;"></div>
<div style="left:1325px;top:256px;width:1px;height:22px;background:#4a4a4a;"></div>
<div style="left:1405px;top:256px;width:1px;height:22px;background:#4a4a4a;"></div>
<div style="left:1485px;top:256px;width:1px;height:22px;background:#4a4a4a;"></div>
<div style="left:1565px;top:256px;width:1px;height:22px;background:#4a4a4a;"></div>
<div style="left:30px;top:256px;width:1px;height:22px;background:#4a4a4a;"></div>
<div style="left:0px;top:278px;width:30px;height:125.5px;background:#6b6b6b;"></div>
<svg class="t" width="1" height="1"><text transform="translate(13.80,298.20)" font-size="16" fill="#e6e6e6" text-anchor="middle">1</text></svg>
<div style="left:0px;top:302.5px;width:30px;height:1px;background:#9a9a9a;"></div>
<svg class="t" width="1" height="1"><text transform="translate(13.80,323.20)" font-size="16" fill="#e6e6e6" text-anchor="middle">2</text></svg>
<div style="left:0px;top:327.5px;width:30px;height:1px;background:#9a9a9a;"></div>
<svg class="t" width="1" height="1"><text transform="translate(13.80,348.20)" font-size="16" fill="#e6e6e6" text-anchor="middle">3</text></svg>
<div style="left:0px;top:352.5px;width:30px;height:1px;background:#9a9a9a;"></div>
<svg class="t" width="1" height="1"><text transform="translate(13.80,373.20)" font-size="16" fill="#e6e6e6" text-anchor="middle">4</text></svg>
<div style="left:0px;top:377.5px;width:30px;height:1px;background:#9a9a9a;"></div>
<svg class="t" width="1" height="1"><text transform="translate(13.80,398.20)" font-size="16" fill="#e6e6e6" text-anchor="middle">5</text></svg>
<div style="left:0px;top:402.5px;width:30px;height:1px;background:#9a9a9a;"></div>
<svg class="t" width="1" height="1"><text transform="translate(13.80,423.20)" font-size="16" fill="#dadada" text-anchor="middle">6</text></svg>
<div style="left:0px;top:427.5px;width:30px;height:1px;background:#454545;"></div>
<svg class="t" width="1" height="1"><text transform="translate(13.80,448.20)" font-size="16" fill="#dadada" text-anchor="middle">7</text></svg>
<div style="left:0px;top:452.5px;width:30px;height:1px;background:#454545;"></div>
<svg class="t" width="1" height="1"><text transform="translate(13.80,473.20)" font-size="16" fill="#dadada" text-anchor="middle">8</text></svg>
<div style="left:0px;top:477.5px;width:30px;height:1px;background:#454545;"></div>
<svg class="t" width="1" height="1"><text transform="translate(13.80,498.20)" font-size="16" fill="#dadada" text-anchor="middle">9</text></svg>
<div style="left:0px;top:502.5px;width:30px;height:1px;background:#454545;"></div>
<svg class="t" width="1" height="1"><text transform="translate(13.80,523.20)" font-size="16" fill="#dadada" text-anchor="middle">10</text></svg>
<div style="left:0px;top:527.5px;width:30px;height:1px;background:#454545;"></div>
<svg class="t" width="1" height="1"><text transform="translate(13.80,548.20)" font-size="16" fill="#dadada" text-anchor="middle">11</text></svg>
<div style="left:0px;top:552.5px;width:30px;height:1px;background:#454545;"></div>
<svg class="t" width="1" height="1"><text transform="translate(13.80,573.20)" font-size="16" fill="#dadada" text-anchor="middle">12</text></svg>
<div style="left:0px;top:577.5px;width:30px;height:1px;background:#454545;"></div>
<svg class="t" width="1" height="1"><text transform="translate(13.80,598.20)" font-size="16" fill="#dadada" text-anchor="middle">13</text></svg>
<div style="left:0px;top:602.5px;width:30px;height:1px;background:#454545;"></div>
<svg class="t" width="1" height="1"><text transform="translate(13.80,623.20)" font-size="16" fill="#dadada" text-anchor="middle">14</text></svg>
<div style="left:0px;top:627.5px;width:30px;height:1px;background:#454545;"></div>
<svg class="t" width="1" height="1"><text transform="translate(13.80,648.20)" font-size="16" fill="#dadada" text-anchor="middle">15</text></svg>
<div style="left:0px;top:652.5px;width:30px;height:1px;background:#454545;"></div>
<svg class="t" width="1" height="1"><text transform="translate(13.80,673.20)" font-size="16" fill="#dadada" text-anchor="middle">16</text></svg>
<div style="left:0px;top:677.5px;width:30px;height:1px;background:#454545;"></div>
<svg class="t" width="1" height="1"><text transform="translate(13.80,698.20)" font-size="16" fill="#dadada" text-anchor="middle">17</text></svg>
<div style="left:0px;top:702.5px;width:30px;height:1px;background:#454545;"></div>
<svg class="t" width="1" height="1"><text transform="translate(13.80,723.20)" font-size="16" fill="#dadada" text-anchor="middle">18</text></svg>
<div style="left:0px;top:727.5px;width:30px;height:1px;background:#454545;"></div>
<svg class="t" width="1" height="1"><text transform="translate(13.80,748.20)" font-size="16" fill="#dadada" text-anchor="middle">19</text></svg>
<div style="left:0px;top:752.5px;width:30px;height:1px;background:#454545;"></div>
<svg class="t" width="1" height="1"><text transform="translate(13.80,773.20)" font-size="16" fill="#dadada" text-anchor="middle">20</text></svg>
<div style="left:0px;top:777.5px;width:30px;height:1px;background:#454545;"></div>
<div style="left:125px;top:278px;width:1px;height:506px;background:#d2d2d2"></div><div style="left:205px;top:278px;width:1px;height:506px;background:#d2d2d2"></div><div style="left:285px;top:278px;width:1px;height:506px;background:#d2d2d2"></div><div style="left:365px;top:278px;width:1px;height:506px;background:#d2d2d2"></div><div style="left:445px;top:278px;width:1px;height:506px;background:#d2d2d2"></div><div style="left:525px;top:278px;width:1px;height:506px;background:#d2d2d2"></div><div style="left:605px;top:278px;width:1px;height:506px;background:#d2d2d2"></div><div style="left:685px;top:278px;width:1px;height:506px;background:#d2d2d2"></div><div style="left:765px;top:278px;width:1px;height:506px;background:#d2d2d2"></div><div style="left:845px;top:278px;width:1px;height:506px;background:#d2d2d2"></div><div style="left:925px;top:278px;width:1px;height:506px;background:#d2d2d2"></div><div style="left:1005px;top:278px;width:1px;height:506px;background:#d2d2d2"></div><div style="left:1085px;top:278px;width:1px;height:506px;background:#d2d2d2"></div><div style="left:1165px;top:278px;width:1px;height:506px;background:#d2d2d2"></div><div style="left:1245px;top:278px;width:1px;height:506px;background:#d2d2d2"></div><div style="left:1325px;top:278px;width:1px;height:506px;background:#d2d2d2"></div><div style="left:1405px;top:278px;width:1px;height:506px;background:#d2d2d2"></div><div style="left:1485px;top:278px;width:1px;height:506px;background:#d2d2d2"></div><div style="left:1565px;top:278px;width:1px;height:506px;background:#d2d2d2"></div><div style="left:31px;top:303px;width:1541px;height:1px;background:#d2d2d2"></div><div style="left:31px;top:328px;width:1541px;height:1px;background:#d2d2d2"></div><div style="left:31px;top:353px;width:1541px;height:1px;background:#d2d2d2"></div><div style="left:31px;top:378px;width:1541px;height:1px;background:#d2d2d2"></div><div style="left:31px;top:403px;width:1541px;height:1px;background:#d2d2d2"></div><div style="left:31px;top:428px;width:1541px;height:1px;background:#d2d2d2"></div><div style="left:31px;top:453px;width:1541px;height:1px;background:#d2d2d2"></div><div style="left:31px;top:478px;width:1541px;height:1px;background:#d2d2d2"></div><div style="left:31px;top:503px;width:1541px;height:1px;background:#d2d2d2"></div><div style="left:31px;top:528px;width:1541px;height:1px;background:#d2d2d2"></div><div style="left:31px;top:553px;width:1541px;height:1px;background:#d2d2d2"></div><div style="left:31px;top:578px;width:1541px;height:1px;background:#d2d2d2"></div><div style="left:31px;top:603px;width:1541px;height:1px;background:#d2d2d2"></div><div style="left:31px;top:628px;width:1541px;height:1px;background:#d2d2d2"></div><div style="left:31px;top:653px;width:1541px;height:1px;background:#d2d2d2"></div><div style="left:31px;top:678px;width:1541px;height:1px;background:#d2d2d2"></div><div style="left:31px;top:703px;width:1541px;height:1px;background:#d2d2d2"></div><div style="left:31px;top:728px;width:1541px;height:1px;background:#d2d2d2"></div><div style="left:31px;top:753px;width:1541px;height:1px;background:#d2d2d2"></div><div style="left:31px;top:778px;width:1541px;height:1px;background:#d2d2d2"></div>
<div style="left:31.4px;top:279.8px;width:93.4px;height:23.2px;background:#f68b32;"></div>
<div style="left:31.4px;top:303px;width:93.4px;height:25px;background:#c9b3a5;"></div>
<div style="left:31.4px;top:328px;width:93.4px;height:25px;background:#c8c8c8;"></div>
<div style="left:31.4px;top:353px;width:93.4px;height:25px;background:#c9b3a5;"></div>
<div style="left:31.4px;top:378px;width:93.4px;height:25px;background:#c8c8c8;"></div>
<div style="left:32px;top:302.5px;width:94px;height:1px;background:#e9a06a;"></div>
<div style="left:32px;top:327.5px;width:94px;height:1px;background:#d8a27e;"></div>
<div style="left:32px;top:352.5px;width:94px;height:1px;background:#d8a27e;"></div>
<div style="left:32px;top:377.5px;width:94px;height:1px;background:#d8a27e;"></div>
<div style="left:104.5px;top:282px;width:20px;height:20px;background:#f4f4f4;border:1px solid #e0e0e0;box-sizing:border-box"></div>
<svg style="left:110px;top:289.5px;" width="9" height="6" viewBox="0 0 9 6"><path d="M0.5 0.5 L8.5 0.5 L4.5 5 Z" fill="#555"/></svg>
<div style="left:29.4px;top:277.8px;width:97.4px;height:126.7px;border:2px solid #1e6c42;box-sizing:border-box"></div>
<div style="left:122.5px;top:400.5px;width:6px;height:6px;background:#1f7246;border:1px solid #fff;box-sizing:content-box;"></div>
<svg style="left:0;top:0" width="1590" height="836" viewBox="0 0 1590 836" font-family="Liberation Sans, sans-serif"><path d="M137 392 L146 401 M137 392 H141.6 M137 392 V396.6 M146 401 H141.4 M146 401 V396.4" stroke="#ffffff" stroke-width="3.2" fill="none" stroke-linecap="square"/><path d="M137 392 L146 401 M137 392 H141.6 M137 392 V396.6 M146 401 H141.4 M146 401 V396.4" stroke="#111111" stroke-width="1.5" fill="none" stroke-linecap="square"/><rect x="129.8" y="407.2" width="27.2" height="27.2" fill="#ffffff" stroke="#ababab" stroke-width="1" /><path d="M138 416.6 H152.2 V428.6 H134.2 V424" stroke="#4a4a4a" stroke-width="1.4" fill="none" /><path d="M137.4 425.4 H149 V422.4 H145.4 V420.6 H141 V422.4 H137.4 Z" stroke="#4a4a4a" stroke-width="1.2" fill="none" /><path d="M137.6 411.4 H141 L139.2 415.4 H141.6 L134.4 423.4 L136.4 417.6 H134 Z" stroke="#f29a2e" stroke-width="0.6" fill="#f7a736" /></svg>
<svg style="left:0;top:0" width="1590" height="836" viewBox="0 0 1590 836" font-family="Liberation Sans, DejaVu Sans, sans-serif"><text x="110.7" y="324.2" font-size="16" fill="#0c0c0c" text-anchor="middle">زهرا</text><text x="109.4" y="349" font-size="16" fill="#0c0c0c" text-anchor="middle">سارا</text><text x="103.3" y="373.6" font-size="16" fill="#0c0c0c" text-anchor="middle">خاطره</text><text x="107" y="398.4" font-size="16" fill="#0c0c0c" text-anchor="middle">ستاره</text><text x="1555" y="232.6" font-size="15" fill="#e8e8e8" text-anchor="middle">نام</text></svg>
<div style="left:1572px;top:256px;width:4px;height:528px;background:#1f1f1f;"></div>
<div style="left:1576px;top:256px;width:14px;height:528px;background:#4d4d4d;"></div>
<div style="left:1576px;top:257px;width:14px;height:18px;background:#5c5c5c;"></div>
<svg style="left:1578.5px;top:262px;" width="9" height="6" viewBox="0 0 9 6"><path d="M0 6 L4.5 0.5 L9 6 Z" fill="#b4b4b4"/></svg>
<div style="left:1576px;top:767px;width:14px;height:17px;background:#5c5c5c;"></div>
<svg style="left:1578.5px;top:773px;" width="9" height="6" viewBox="0 0 9 6"><path d="M0 0 L4.5 5.5 L9 0 Z" fill="#b4b4b4"/></svg>
<div style="left:0px;top:784px;width:1590px;height:28.2px;background:#262626;"></div>
<div style="left:0px;top:809.5px;width:1590px;height:2.7px;background:#222222;"></div>
<div style="left:0px;top:812.2px;width:1590px;height:23.8px;background:#2f2f2e;"></div>
<div style="left:0px;top:812.2px;width:1590px;height:1.4px;background:#343434;"></div>
<div style="left:100px;top:784px;width:78.5px;height:25px;background:#ffffff;"></div>
<div style="left:97px;top:808.3px;width:84px;height:2.4px;background:#1f7246;"></div>
<svg class="t" width="1" height="1"><text transform="translate(112.70,801.20)" font-size="16" fill="#1e7145" font-weight="bold" textLength="52.70" lengthAdjust="spacing">Sheet1</text></svg>
<svg style="left:24px;top:794px;" width="7" height="10" viewBox="0 0 7 10"><path d="M6.5 0 L0.5 5 L6.5 10 Z" fill="#8a8a8a"/></svg>
<svg style="left:53.5px;top:794px;" width="7" height="10" viewBox="0 0 7 10"><path d="M0.5 0 L6.5 5 L0.5 10 Z" fill="#8a8a8a"/></svg>
<svg style="left:210.7px;top:787.9px;" width="22" height="22" viewBox="0 0 22 22"><circle cx="11" cy="11" r="9.6" fill="none" stroke="#e8e8e8" stroke-width="1.3"/><path d="M11 5.6 V16.4 M5.6 11 H16.4" stroke="#fff" stroke-width="1.9" fill="none"/></svg>
<svg class="t" width="1" height="1"><text transform="translate(7.00,831.30)" font-size="13" fill="#e6e6e6" textLength="35.90" lengthAdjust="spacing">Ready</text></svg>
<div style="left:600px;top:789.5px;width:922px;height:18.7px;background:#4d4d4d;"></div>
<div style="left:1522px;top:789.5px;width:4px;height:18.7px;background:#3c3c3c;"></div>
<div style="left:1526px;top:789.5px;width:28px;height:18.7px;background:#333333;"></div>
<div style="left:1554.2px;top:789.5px;width:17.2px;height:18.7px;background:#555555;"></div>
<svg style="left:1560.5px;top:794px;" width="6" height="10" viewBox="0 0 6 10"><path d="M0.3 0 L5.8 5 L0.3 10 Z" fill="#a8a8a8"/></svg>
<svg class="t" width="1" height="1"><text transform="translate(1016.70,830.80)" font-size="12.8" fill="#e6e6e6" textLength="46.60" lengthAdjust="spacing">Count: 5</text></svg>
<svg class="t" width="1" height="1"><text transform="translate(1109.90,830.80)" font-size="12.8" fill="#e6e6e6" textLength="90.10" lengthAdjust="spacing">Display Settings</text></svg>
<div style="left:1225px;top:814px;width:50px;height:22px;background:#4c4c4c;"></div>
<svg class="t" width="1" height="1"><text transform="translate(1556.00,831.60)" font-size="12.8" fill="#e6e6e6" textLength="30.20" lengthAdjust="spacing">100%</text></svg>
<svg style="left:0;top:0" width="1590" height="836" viewBox="0 0 1590 836" font-family="Liberation Sans, sans-serif"><path d="M1088 819 H1105 V830 H1088 Z M1093.6 833.4 H1099.4" stroke="#e0e0e0" stroke-width="1.3" fill="none" /><path d="M1241 819 H1259 V833.6 H1241 Z M1247 819 V833.6 M1253 819 V833.6 M1241 824 H1259 M1241 829 H1259" stroke="#e0e0e0" stroke-width="1.3" fill="none" /><path d="M1291.6 818.6 H1308.6 V834.2 H1291.6 Z" stroke="#e0e0e0" stroke-width="1.3" fill="none" /><path d="M1295.6 822.4 H1304.6 V830.6 H1295.6 Z M1295.6 825 H1304.6 M1295.6 827.8 H1304.6" stroke="#e0e0e0" stroke-width="1.2" fill="none" /><path d="M1342 818.6 H1358.2 V834.2 H1342 Z" stroke="#e0e0e0" stroke-width="1.3" fill="none" /><path d="M1346.6 818.6 V826.6 H1353.4 V818.6" stroke="#e0e0e0" stroke-width="1.3" fill="none" /><path d="M1381.8 826.8 H1391.6" stroke="#e0e0e0" stroke-width="1.2" fill="none" /><path d="M1398 826.8 H1522.4" stroke="#e0e0e0" stroke-width="1.2" fill="none" /><rect x="1458" y="820" width="6" height="14" fill="#f4f4f4" stroke="none" stroke-width="0" /><path d="M1528.6 826.8 H1538.6 M1533.6 821.8 V831.8" stroke="#e0e0e0" stroke-width="1.2" fill="none" /></svg>
<div style="left:302px;top:770px;width:987px;height:61.5px;border-radius:8px;background:rgba(0,0,0,0.78)"></div>
<svg style="left:0;top:0" width="1590" height="836" viewBox="0 0 1590 836" font-family="Liberation Sans, DejaVu Sans, sans-serif"><text x="795.5" y="808.7" font-size="31" fill="#ffffff" text-anchor="middle">به این شکل میتونین ستون جدیدی شبیه ستون قبلی به جدول تون اضافه کنین</text></svg>
</div></body></html>
